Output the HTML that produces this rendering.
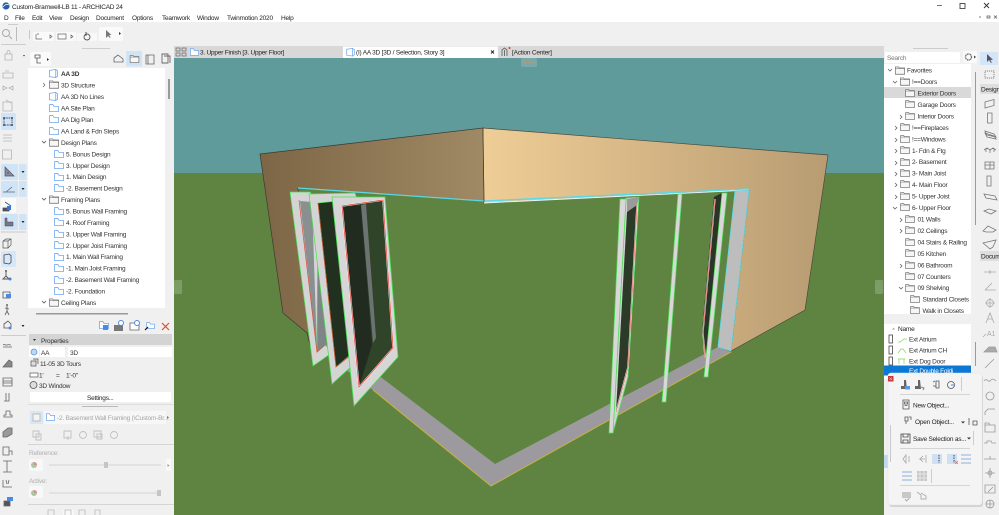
<!DOCTYPE html>
<html><head><meta charset="utf-8"><style>
html,body{margin:0;padding:0;width:999px;height:515px;overflow:hidden;background:#f0f0f0}
svg{display:block;filter:blur(.3px)}
text{font-family:"Liberation Sans",sans-serif;font-size:6.5px;letter-spacing:-.22px;fill:#333}
.m text,text.m{fill:#222}
.d text,text.d{fill:#aaa}
</style></head><body>
<svg width="999" height="515" viewBox="0 0 999 515" xmlns="http://www.w3.org/2000/svg">
<defs>
<symbol id="fb" viewBox="0 0 12 10" overflow="visible"><path d="M.5 9.5V.7H4.5L6 3H11.5V9.5Z" fill="#fff" stroke="#6ea8f0" stroke-width="1"/></symbol>
<symbol id="fg" viewBox="0 0 12 10" overflow="visible"><path d="M.5 9.5V.7H4.5L5 2H11.5V9.5Z" fill="#f6f6f6" stroke="#666" stroke-width=".8"/><path d="M.5 2.6H11.5" stroke="#666" stroke-width=".6"/></symbol>
<symbol id="c3" viewBox="0 0 10 10" overflow="visible"><path d="M.5 1.5L7.5.5V9.5L.5 8.5ZM7.5.5L9.5 2V8L7.5 9.5" fill="#fff" stroke="#6ea8f0" stroke-width=".9"/></symbol>
</defs>

<!-- title + menu -->
<rect width="999" height="22" fill="#fff"/>
<circle cx="6" cy="6" r="3.6" fill="#2a5fa8"/><path d="M3 7Q6 3 9 5" stroke="#fff" stroke-width=".7" fill="none"/>
<text x="12" y="9" class="m">Custom-Bramwell-LB 11 - ARCHICAD 24</text>
<g class="m">
<text x="4" y="20">D</text><text x="15" y="20">File</text><text x="32" y="20">Edit</text><text x="49" y="20">View</text><text x="70" y="20">Design</text><text x="96" y="20">Document</text><text x="132" y="20">Options</text><text x="162" y="20">Teamwork</text><text x="197" y="20">Window</text><text x="227" y="20">Twinmotion 2020</text><text x="281" y="20">Help</text>
</g>
<path d="M937 5.5H942" stroke="#555" stroke-width=".8"/><rect x="960" y="3.5" width="5" height="5" fill="none" stroke="#444" stroke-width=".9"/><path d="M984 3L989 8M989 3L984 8" stroke="#333" stroke-width=".9"/>
<path d="M979 17H981M987 16h3v2h-3zM994 15.500L997 18.500M997 15.500L994 18.500" stroke="#555" stroke-width=".7" fill="none"/>

<!-- top toolbar -->
<rect y="22" width="999" height="24" fill="#f0f0f0"/>
<rect x="29" y="30" width="1" height="9" fill="#c8c8c8"/>
<rect x="33" y="32" width="21" height="9" rx="1.500" fill="#fafafa"/><path d="M36 34v5h6M37 34h2M50 35l2 1.500-2 1.500z" stroke="#666" fill="none" stroke-width=".7"/>
<rect x="56" y="32" width="20" height="9" rx="1.500" fill="#fafafa"/><path d="M58 34h8v5h-8zM71 35l2 1.500-2 1.500z" stroke="#666" fill="none" stroke-width=".7"/>
<rect x="77" y="33" width="20" height="8" rx="1.500" fill="#f8f8f8"/><circle cx="87" cy="37" r="3" fill="none" stroke="#555" stroke-width=".9"/><path d="M86 32v4" stroke="#555"/>
<rect x="99" y="27" width="24" height="14" rx="2" fill="#fafafa"/><path d="M106 30v8l2-2 2 2 .5-1-1.500-2h2.500z" fill="#777"/><path d="M119 32l2 1.500-2 1.500z" fill="#333"/>

<!-- left toolbar -->
<rect y="46" width="28" height="469" fill="#f0f0f0"/>
<rect x="8" y="24" width="10" height="1" fill="#ccc"/><rect x="16" y="27" width="1" height="14" fill="#bbb"/>
<circle cx="6" cy="33" r="3.500" fill="none" stroke="#aaa"/><path d="M9 36l3 3" stroke="#aaa"/>
<rect x="1" y="44" width="25" height="1" fill="#ccc"/>
<g fill="none" stroke="#b5b5b5" stroke-width=".8">
<path d="M5 54h7v6H5zM7 54v-2a1.500 1.500 0 0 1 3 0v2"/>
<path d="M3 73h10v5H3zM5 71h4"/>
<path d="M3 86l4 2-4 2zM13 86l-4 2 4 2z"/>
<path d="M3 102h9v9H3zM6 100l5 3"/>
<path d="M3 135h9M3 138h9M3 141h9"/>
<path d="M2.500 150h9v9h-9z"/>
</g>
<path d="M23 55l2 0-1 1.500z" fill="#333"/>
<rect x="1" y="113" width="15" height="17" rx="1.500" fill="#cfe4f7"/><path d="M4 118h8v7H4z" fill="none" stroke="#445" stroke-width=".9" stroke-dasharray="1.500 .8"/><circle cx="4" cy="118" r="1" fill="#445"/><circle cx="12" cy="118" r="1" fill="#445"/><circle cx="4" cy="125" r="1" fill="#445"/><circle cx="12" cy="125" r="1" fill="#445"/>
<rect x="1" y="164" width="17" height="16" rx="1" fill="#cfe4f7"/><rect x="19" y="164" width="7.500" height="16" rx="1" fill="#cfe4f7"/><path d="M5 167v9h9zM7 173h2" fill="#889" stroke="#556" stroke-width=".7"/><path d="M21.500 171h3l-1.500 2z" fill="#222"/>
<rect x="1" y="181" width="17" height="16" rx="1" fill="#cfe4f7"/><rect x="19" y="181" width="7.500" height="16" rx="1" fill="#cfe4f7"/><path d="M3 192h12M6 192l6-5" stroke="#667" stroke-width=".8" fill="none"/><path d="M21.500 188h3l-1.500 2z" fill="#222"/>
<rect x="1" y="198" width="15" height="15" fill="#fafafa"/><path d="M3 208h6v3H3zM5 202l6 4" stroke="#445" fill="#556" stroke-width=".8"/><rect x="7" y="206" width="4" height="4" fill="#2c7ad8"/>
<rect x="1" y="214" width="17" height="16" rx="1" fill="#cfe4f7"/><rect x="19" y="214" width="7.500" height="16" rx="1" fill="#cfe4f7"/><path d="M5 218h2v4h6v4H5z" fill="#778" stroke="#445" stroke-width=".5"/><path d="M21.500 221h3l-1.500 2z" fill="#222"/>
<rect x="1" y="231" width="25" height="2" fill="#ddd"/>
<path d="M3 241l3-2h5v6l-3 3H3zM3 241h5v7M8 241l3-2" fill="none" stroke="#555" stroke-width=".7"/>
<rect x="1" y="251" width="15" height="16" rx="1.500" fill="#d6e8f8"/><path d="M4 255l5-1 2 1.500v7l-2 1.500-5-1z" fill="none" stroke="#445" stroke-width=".8"/>
<path d="M6 272v4l-3 3h7M6 276l3 3" stroke="#555" fill="none" stroke-width=".9"/><circle cx="6" cy="271" r="1" fill="#555"/><circle cx="10" cy="279" r="1.500" fill="#3b82d8"/>
<path d="M3 292h7v6H3z" fill="none" stroke="#555" stroke-width=".8"/><rect x="6" y="294" width="5" height="4" fill="#4a8adf"/>
<path d="M7 306v5l-2 4M7 311l2 4M5 308l4 1" stroke="#666" fill="none" stroke-width=".9"/><circle cx="7" cy="305" r="1" fill="#666"/>
<path d="M4 324l4-3 3 3v4H4z" fill="none" stroke="#555" stroke-width=".8"/><circle cx="10" cy="328" r="1.500" fill="#4a8adf"/><path d="M21.500 325h3l-1.500 2z" fill="#222"/>
<rect x="1" y="335" width="25" height="1" fill="#ccc"/>
<g fill="none" stroke="#666" stroke-width=".8">
<path d="M3 347h9M3 345c2-2 2 1 4 0s2 0 4 0"/>
<path d="M3 367l6-7 3 2v5z" fill="#888"/>
<path d="M3 378h9v8H3zM3 381h9M3 383h9"/>
<path d="M6 393v8h3v-8M4 401h5"/>
<path d="M4 417h8v-2h-2v-4H6v4H4z"/>
<path d="M3 432l5-4h4v6l-5 3H3z" fill="#999"/>
<path d="M3 447h6v8H3zM6 447h3v4h3v4"/>
<path d="M3 461h9M3 472h9M7 461v11"/>
<path d="M3 480v7h9M6 480l1 4M9 480l-1 4"/>
<path d="M4 506v-5h6v5z" fill="#555"/>
</g>
<rect x="7" y="497" width="6" height="4" fill="#4a8adf"/>

<!-- navigator panel -->
<rect x="28" y="46" width="146" height="469" fill="#f0f0f0"/>
<rect x="82" y="48" width="28" height="1" fill="#ccc"/>
<rect x="30" y="52" width="21" height="14" rx="2" fill="#fafafa"/><path d="M35 55h5v3h-5zM37 58v5h4" fill="none" stroke="#555" stroke-width=".8"/><path d="M47 58l2 1.500-2 1.500z" fill="#333"/>
<path d="M114 62v-4l4-3 5 4v3z" fill="none" stroke="#666" stroke-width=".8"/>
<rect x="126" y="51" width="16" height="15.500" rx="1" fill="#cfe4f7"/><use href="#fg" x="129" y="55" width="11" height="8"/>
<path d="M146 55h8v9h-8zM148 55v9" fill="none" stroke="#666" stroke-width=".8"/>
<path d="M162 54h6v9h-6zM164 56h6v7" fill="none" stroke="#666" stroke-width=".9"/>
<rect x="28" y="68" width="137" height="240" fill="#fff"/>
<rect x="168" y="79" width="2" height="20" fill="#9a9a9a"/>
<rect x="36" y="313" width="92" height="1.500" fill="#999"/>

<use href="#c3" x="49" y="69" width="9" height="9"/><text x="61" y="76" style="font-weight:bold">AA 3D</text>
<path d="M43 83l2 2-2 2" fill="none" stroke="#666" stroke-width=".7"/><use href="#fg" x="49" y="80" width="10" height="9"/><text x="61" y="87.500">3D Structure</text>
<use href="#c3" x="49" y="92" width="9" height="9"/><text x="61" y="99">AA 3D No Lines</text>
<use href="#fb" x="49" y="104" width="10" height="8"/><text x="61" y="110.500">AA Site Plan</text>
<use href="#fb" x="49" y="115" width="10" height="8"/><text x="61" y="122">AA Dig Plan</text>
<use href="#fb" x="49" y="127" width="10" height="8"/><text x="61" y="133.500">AA Land &amp; Fdn Steps</text>
<path d="M42 141l2 2 2-2" fill="none" stroke="#555" stroke-width=".8"/><use href="#fg" x="49" y="138" width="10" height="9"/><text x="61" y="145">Design Plans</text>
<use href="#fb" x="54" y="150" width="10" height="8"/><text x="66" y="156.500">5. Bonus Design</text>
<use href="#fb" x="54" y="161" width="10" height="8"/><text x="66" y="168">3. Upper Design</text>
<use href="#fb" x="54" y="173" width="10" height="8"/><text x="66" y="179">1. Main Design</text>
<use href="#fb" x="54" y="184" width="10" height="8"/><text x="66" y="190.500">-2. Basement Design</text>
<path d="M42 198l2 2 2-2" fill="none" stroke="#555" stroke-width=".8"/><use href="#fg" x="49" y="195" width="10" height="9"/><text x="61" y="202">Framing Plans</text>
<use href="#fb" x="54" y="207" width="10" height="8"/><text x="66" y="213.500">5. Bonus Wall Framing</text>
<use href="#fb" x="54" y="218" width="10" height="8"/><text x="66" y="225">4. Roof Framing</text>
<use href="#fb" x="54" y="230" width="10" height="8"/><text x="66" y="236.500">3. Upper Wall Framing</text>
<use href="#fb" x="54" y="241" width="10" height="8"/><text x="66" y="248">2. Upper Joist Framing</text>
<use href="#fb" x="54" y="253" width="10" height="8"/><text x="66" y="259">1. Main Wall Framing</text>
<use href="#fb" x="54" y="264" width="10" height="8"/><text x="66" y="270.500">-1. Main Joist Framing</text>
<use href="#fb" x="54" y="276" width="10" height="8"/><text x="66" y="282">-2. Basement Wall Framing</text>
<use href="#fb" x="54" y="287" width="10" height="8"/><text x="66" y="293.500">-2. Foundation</text>
<path d="M42 301l2 2 2-2" fill="none" stroke="#555" stroke-width=".8"/><use href="#fg" x="49" y="298" width="10" height="9"/><text x="61" y="305">Ceiling Plans</text>

<!-- nav actions -->
<use href="#fb" x="99" y="321" width="10" height="8"/><rect x="103" y="325" width="5" height="5" fill="#4a8adf"/>
<path d="M114 325h9v6h-9z" fill="#777"/><circle cx="121" cy="323" r="2.500" fill="#fff" stroke="#4a8adf"/>
<path d="M130 323h9v7h-9z" fill="#fff" stroke="#666" stroke-width=".8"/><circle cx="137" cy="323" r="2.500" fill="#fff" stroke="#4a8adf"/>
<use href="#fb" x="146" y="322" width="9" height="7"/><path d="M145 330l3-3" stroke="#111" stroke-width="1.200"/>
<path d="M162 323l7 7M169 323l-7 7" stroke="#e8482a" stroke-width="1.200"/>

<!-- properties -->
<rect x="29" y="334" width="143" height="11" fill="#d4d4d4"/><path d="M33 339h3l-1.500 2z" fill="#333"/><text x="41" y="343">Properties</text>
<rect x="29" y="346" width="10" height="11" fill="#fff"/><circle cx="34" cy="352" r="3" fill="#bcd6f4" stroke="#5b95e0" stroke-width=".8"/>
<rect x="40" y="347" width="25" height="10" fill="#fff"/><text x="41" y="355">AA</text>
<rect x="68" y="347" width="104" height="10" fill="#fff"/><text x="70" y="355">3D</text>
<path d="M31 361h5v5h-5zM33 359h5v5" fill="#ddd" stroke="#555" stroke-width=".7"/><text x="40" y="366">11-05 3D Tours</text>
<rect x="30" y="373" width="8" height="4" fill="#fff" stroke="#555" stroke-width=".7"/><text x="39" y="377.500">1'</text><text x="56" y="377.500">=</text><text x="66" y="377.500">1'-0"</text>
<circle cx="33.500" cy="385" r="3.500" fill="#ddd" stroke="#555" stroke-width=".8"/><text x="39" y="388">3D Window</text>
<rect x="30" y="392" width="141" height="10" rx="1.500" fill="#fff"/><text x="87" y="400" style="fill:#222">Settings...</text>
<rect x="28" y="404" width="146" height="1" fill="#ddd"/><rect x="82" y="406" width="36" height="1" fill="#bbb"/>

<rect x="30" y="411" width="13" height="13" rx="1" fill="#d9e6f4"/><rect x="33" y="414" width="7" height="7" fill="#f4f4f4" stroke="#bbb"/>
<rect x="44" y="411" width="122" height="13" fill="#f7f7f7"/><use href="#fb" x="46" y="413" width="9" height="8"/>
<text x="57" y="420" style="fill:#a5a5a5">-2. Basement Wall Framing (\Custom-Br...</text><path d="M167 416l2 1.500-2 1.500z" fill="#777"/>
<g fill="none" stroke="#c0c0c0" stroke-width=".9"><path d="M33 431h6v6h-6zM36 434h5v6h-5z"/><path d="M64 431h7v7h-7zM68 436v4M66 438h4"/><circle cx="83" cy="435" r="3.500"/><path d="M94 431h7v6h-7zM97 434h5v5h-5z"/><circle cx="114" cy="435" r="3.500"/></g>
<rect x="28" y="444" width="146" height="1" fill="#d4d4d4"/>
<text x="29" y="455" style="fill:#b0b0b0">Reference:</text>
<rect x="29" y="459" width="14" height="12" rx="2" fill="#f8f8f8"/><circle cx="34" cy="465" r="3" fill="#a5c8a5"/><path d="M34 465V462A3 3 0 0 1 37 465Z" fill="#d98f8f"/>
<rect x="49" y="464" width="112" height="2" fill="#e2e2e2"/><rect x="104" y="462" width="4" height="6" fill="#c5c5c5"/>
<rect x="166" y="459" width="5" height="12" fill="#f8f8f8"/><path d="M167.500 464l2 1.500-2 1.500z" fill="#999"/>
<text x="29" y="483" style="fill:#b0b0b0">Active:</text>
<rect x="29" y="486" width="14" height="12" rx="2" fill="#f8f8f8"/><circle cx="34" cy="493" r="3" fill="#a5c8a5"/><path d="M34 493V490A3 3 0 0 1 37 493Z" fill="#d98f8f"/>
<rect x="49" y="492" width="112" height="2" fill="#e2e2e2"/><rect x="157" y="490" width="4" height="6" fill="#c5c5c5"/>
<rect x="28" y="504" width="146" height="1" fill="#d4d4d4"/>
<rect x="63" y="510" width="11" height="5" fill="#f8f8f8"/><g fill="none" stroke="#bbb" stroke-width=".8"><path d="M48 515v-5h6v5M65 515v-5h6v5M79 515v-5h6v5M95 515v-5h5v5"/></g>

<!-- tabs -->
<rect x="174" y="46" width="710" height="12" fill="#d8d8d8"/>
<path d="M176 48h4v3h-4zM182 48h4v3h-4zM176 53h4v3h-4zM182 53h4v3h-4z" fill="none" stroke="#666" stroke-width=".7"/>
<use href="#fb" x="190" y="48" width="9" height="8"/><text x="200" y="54.500" style="fill:#222">3. Upper Finish [3. Upper Floor]</text>
<rect x="343" y="46.500" width="155" height="11.500" fill="#fff"/>
<use href="#c3" x="346" y="48" width="9" height="8.500"/><text x="356" y="54.500" style="fill:#222">(I) AA 3D [3D / Selection, Story 3]</text>
<path d="M491 50.500l3 3M494 50.500l-3 3" stroke="#222" stroke-width=".9"/>
<path d="M502 56v-6l2.500-2 2.500 2v6M504.500 50v6" fill="none" stroke="#555" stroke-width=".8"/><circle cx="509.500" cy="48" r="1" fill="#e8361e"/>
<text x="512" y="54.500" style="fill:#222">[Action Center]</text>

<!-- 3D view -->
<rect x="174" y="58" width="710" height="115.500" fill="#5f9b9a"/>
<rect x="174" y="173" width="710" height="342" fill="#5f8442"/>
<rect x="521" y="58" width="16" height="9" rx="1.500" fill="#78a8a8"/><path d="M523 62.500h12" stroke="#c09a6a" stroke-dasharray="1.500 1"/>
<rect x="174" y="280" width="8" height="14" rx="1.500" fill="#7d9c66"/><rect x="875" y="280" width="8" height="14" rx="1.500" fill="#7d9c66"/>

<defs>
<linearGradient id="lw" x1="0" x2="1" y1="0" y2="0"><stop offset="0" stop-color="#7d6645"/><stop offset="1" stop-color="#a08a65"/></linearGradient>
<linearGradient id="rw" x1="0" x2="1" y1="0" y2="0"><stop offset="0" stop-color="#efcd96"/><stop offset="1" stop-color="#b89c72"/></linearGradient>
</defs>
<!-- floor strip -->
<path d="M318 340L382 378 495 464 718 347 731 352 491 486 373 390 330 358Z" fill="#9c9a9e"/>
<path d="M731 352L491 486 373 390" fill="none" stroke="#c9b23c" stroke-width="1"/>
<!-- walls -->
<path d="M260 154L483 128 484 201 298 188 310 345 307 333 283 313Z" fill="url(#lw)" stroke="#3c3a30" stroke-width=".7"/>
<path d="M483 128L828 155 805 310 731 351 749 190 484 203Z" fill="url(#rw)" stroke="#4c4a3a" stroke-width=".7"/>
<path d="M298 188L484 201 749 189" fill="none" stroke="#5ad8e4" stroke-width="1.300"/>
<path d="M484 203L749 190" fill="none" stroke="#e4fbff" stroke-width=".9"/>
<path d="M483 128L484 202" stroke="#4c4433" stroke-width=".7"/>
<!-- jamb right -->
<path d="M735 191L749 190 731 351 718 347Z" fill="#bdbdbd" stroke="#5ad8e4" stroke-width=".8"/>

<!-- left doors -->
<g>
<path d="M300 201L325 200 337 340 317 363Z" fill="#7f8586"/>
<path d="M290 192L310 192 318 203 317 352 325 345 333 352 313 366Z" fill="#d4d4d4" stroke="#46e050" stroke-width=".7"/>
<path d="M300 201L312 202 317 352Z" fill="#8a8f90"/>
<path d="M299 200L317 352 325 345" fill="none" stroke="#d84a3a" stroke-width=".7"/>
<path d="M318 203L355 199 378 342 336 367Z" fill="#22301f"/>
<path d="M309 194L355 193 357 199 318 203 336 367 376 333 377 343 332 384Z" fill="#d4d4d4" stroke="#46e050" stroke-width=".7"/>
<path d="M318 203L336 367 351 355" fill="none" stroke="#d84a3a" stroke-width=".7"/>
<path d="M342 206L383 200 393 348 359 387Z" fill="#2f4429"/>
<path d="M343 207L361 205 372 345 359 387Z" fill="#222b1f"/>
<path d="M361 205L366 204 376 338 373 343Z" fill="#6d7372"/>
<path fill-rule="evenodd" d="M332 197L385 197 398 357 354 406ZM342 206L383 200 393 348 359 387Z" fill="#d6d6d6" stroke="#46e050" stroke-width=".8"/>
<path d="M342 206L383 200 393 348 359 387Z" fill="none" stroke="#fafafa" stroke-width="1.500"/>
<path d="M342 206L383 200 393 348 359 387Z" fill="none" stroke="#e0352e" stroke-width=".7"/>
</g>
<!-- right doors -->
<path d="M626 198L639 197 628 377 613 433Z" fill="#d2d2d2" stroke="#46e050" stroke-width=".7"/>
<path d="M627 199L639 197 637 205 627 212Z" fill="#9a9a9a"/>
<path d="M627 212L637 205 628 367 616 412Z" fill="#2c3a28"/>
<path d="M637 205L628 367 616 412" fill="none" stroke="#f4f4f4" stroke-width="1.400"/>
<path d="M637 205L628 367 616 412" fill="none" stroke="#d83a30" stroke-width=".5"/>
<path d="M620 199L626 199 613 433 609 433Z" fill="#d8d8d8" stroke="#46e050" stroke-width=".7"/>
<path d="M678 194L682 194 666 402 662 402Z" fill="#d8d8d8" stroke="#46e050" stroke-width=".7"/>
<path d="M714 197L722 193 721 202 710 358 706 350 702 332Z" fill="#2a3527"/>
<path d="M715 199L703 332 705 358" fill="none" stroke="#f4f4f4" stroke-width="1.300"/>
<path d="M715 199L703 332 705 358" fill="none" stroke="#d83a30" stroke-width=".5"/>
<path d="M722 193L727 193 708 377 704 377Z" fill="#d8d8d8" stroke="#46e050" stroke-width=".7"/>

<!-- right panel -->
<rect x="884" y="46" width="115" height="469" fill="#f0f0f0"/>
<rect x="913" y="48" width="35" height="1" fill="#ccc"/>
<rect x="885" y="52" width="75" height="11" fill="#fff"/><text x="887" y="60" style="fill:#777">Search</text>
<rect x="963" y="51" width="14" height="12" rx="2" fill="#fafafa"/><circle cx="968.500" cy="57" r="3" fill="none" stroke="#666" stroke-width="1.300" stroke-dasharray="1.200 .5"/><path d="M974 55.500l2 1.500-2 1.500z" fill="#444"/>
<rect x="884" y="64" width="87" height="250" fill="#fff"/>
<rect x="884" y="87" width="87" height="11" fill="#d9d9d9"/>
<rect x="975" y="72" width="1" height="153" fill="#9a9a9a"/>
<g fill="none" stroke="#666" stroke-width=".8">
<path d="M888 69l2 2 2-2M893 81l2 2 2-2M895 126l2 2-2 2M895 138l2 2-2 2M895 149l2 2-2 2M895 161l2 2-2 2M895 172l2 2-2 2M895 183l2 2-2 2M895 195l2 2-2 2M893 207l2 2 2-2M900 218l2 2-2 2M900 229l2 2-2 2M900 264l2 2-2 2M899 287l2 2 2-2M900 115l2 2-2 2"/>
</g>
<use href="#fg" x="895" y="66" width="10" height="9"/>
<use href="#fg" x="900" y="77" width="10" height="9"/><text x="912" y="84">!==Doors</text>
<use href="#fg" x="905" y="89" width="10" height="8"/><text x="917.500" y="95.500">Exterior Doors</text>
<use href="#fg" x="905" y="100" width="10" height="8"/><text x="917.500" y="107">Garage Doors</text>
<use href="#fg" x="905" y="112" width="10" height="8"/><text x="917.500" y="118.500">Interior Doors</text>
<use href="#fg" x="900" y="123" width="10" height="8"/><text x="912" y="130">!==Fireplaces</text>
<use href="#fg" x="900" y="135" width="10" height="8"/><text x="912" y="141.500">!==Windows</text>
<use href="#fg" x="900" y="146" width="10" height="8"/><text x="912" y="153">1- Fdn &amp; Ftg</text>
<use href="#fg" x="900" y="158" width="10" height="8"/><text x="912" y="164">2- Basement</text>
<use href="#fg" x="900" y="169" width="10" height="8"/><text x="912" y="175.500">3- Main Joist</text>
<use href="#fg" x="900" y="180" width="10" height="8"/><text x="912" y="187">4- Main Floor</text>
<use href="#fg" x="900" y="192" width="10" height="8"/><text x="912" y="198.500">5- Upper Joist</text>
<use href="#fg" x="900" y="203" width="10" height="8"/><text x="912" y="210">6- Upper Floor</text>
<use href="#fg" x="905" y="215" width="10" height="8"/><text x="917.500" y="221.500">01 Walls</text>
<use href="#fg" x="905" y="226" width="10" height="8"/><text x="917.500" y="233">02 Ceilings</text>
<use href="#fg" x="905" y="238" width="10" height="8"/><text x="917.500" y="244.500">04 Stairs &amp; Railing</text>
<use href="#fg" x="905" y="249" width="10" height="8"/><text x="917.500" y="256">05 Kitchen</text>
<use href="#fg" x="905" y="261" width="10" height="8"/><text x="917.500" y="267.500">06 Bathroom</text>
<use href="#fg" x="905" y="272" width="10" height="8"/><text x="917.500" y="279">07 Counters</text>
<use href="#fg" x="905" y="284" width="10" height="8"/><text x="917.500" y="290">09 Shelving</text>
<use href="#fg" x="910" y="295" width="10" height="8"/><text x="922.500" y="301.500">Standard Closets</text>
<use href="#fg" x="910" y="306" width="10" height="8"/><text x="922.500" y="313">Walk in Closets</text>
<text x="907" y="72.500">Favorites</text>

<!-- object list -->
<rect x="884" y="324" width="87" height="55" fill="#fff"/>
<path d="M892 329.500h3l-1.500-2z" fill="#aaa"/><text x="898" y="331" style="fill:#222">Name</text>
<rect x="884" y="365.500" width="87" height="10" fill="#0a78d4"/>
<rect x="975" y="342" width="1" height="24" fill="#9a9a9a"/>
<g fill="#fff" stroke="#444" stroke-width=".8"><rect x="889" y="335" width="3.500" height="8"/><rect x="889" y="346" width="3.500" height="8"/><rect x="889" y="357" width="3.500" height="8"/></g>
<path d="M898 342h2l4-3h3M898 353l3-4h2l3 4M898 359h7M899 359v5M904 359v5" fill="none" stroke="#7dd860" stroke-width=".7"/>
<text x="909" y="341.500">Ext Atrium</text><text x="909" y="352.500">Ext Atrium CH</text><text x="909" y="363.500">Ext Dog Door</text><text x="909" y="373" style="fill:#fff">Ext Double Foldi</text>
<rect x="884" y="455" width="5" height="13" fill="#bcd8ef"/>

<!-- right toolbar -->
<rect x="980" y="52" width="18" height="13" fill="#d3e5f6"/><path d="M987 54v8l2-2 2 3 .8-.6-1.500-2.500H993z" fill="#556"/>
<rect x="985" y="71" width="9" height="7" fill="none" stroke="#666" stroke-width=".7" stroke-dasharray="1.200 .8"/>
<rect x="980" y="84" width="19" height="10" fill="#dedede"/><text x="981" y="91.500" style="fill:#222">Design</text>
<rect x="980" y="251" width="19" height="10" fill="#dedede"/><text x="981" y="258.500" style="fill:#222">Docum</text>
<g fill="none" stroke="#777" stroke-width=".8">
<path d="M985 102l9-2.500v6l-9 2.500z"/>
<path d="M987.500 113h4.500v10h-4.500z"/>
<path d="M985 131l9 3 2 3-9-2zM985 133l9 3 2 3-9-2z"/>
<path d="M984 150l3-2 3 2 3-2 3 2M986 149v3M990 150v3M994 149v3"/>
<path d="M985 162h9v7h-9zM990 162v7M985 165h9"/>
<path d="M987 176h4v10h-4z"/>
<path d="M984 194l11 2 2 4-11-2z"/>
<path d="M984 211l5-2 7 2-5 3z"/>
<path d="M983 231l5-5 8 4-3 2-7 0z"/>
<path d="M983 243l13-3-3 7-3 2z"/>
</g>
<g fill="none" stroke="#aaa" stroke-width=".8">
<path d="M984 272h12M990 270v4"/>
<path d="M985 290l7-7M985 290h11"/>
<circle cx="990" cy="303" r="3.500"/><path d="M990 298v10M985 303h10"/>
<path d="M986 323l4-10 4 10M987.500 319h5"/>
<path d="M983 337l3-3"/>
</g>
<text x="987" y="336" style="fill:#aaa;font-size:7px">A1</text>
<g fill="none" stroke="#999" stroke-width=".8">
<path d="M984 352l5-5h6l2 5z" fill="#aaa"/>
<path d="M985 368l9-9"/>
<path d="M984 381c3-4 4 2 6 0s3-3 6 0"/>
<circle cx="990" cy="396" r="4"/>
<path d="M985 415v-3l3-3h7"/>
<path d="M985 425h10v7h-10zM985 425v-2h4l1 2"/>
<path d="M984 443h3v-2h4l1 2h4"/>
<path d="M984 459h12M990 456v3"/>
<circle cx="990" cy="473" r="2"/><path d="M990 468v10M985 473h10"/>
<path d="M985 485h10v8h-10zM988 492l5-5"/>
<circle cx="990" cy="504" r="4"/><path d="M986 504h8M990 500v8"/>
</g>

<!-- popup palette -->
<rect x="889" y="375" width="94" height="132" rx="3" fill="#000" opacity=".12"/>
<rect x="888" y="373" width="94" height="132" rx="3" fill="#f4f4f4" stroke="#e4e4e4" stroke-width=".6"/>
<rect x="888" y="376" width="5.500" height="5.500" fill="#c43c3c"/><path d="M889.500 377.500l2.500 2.500M892 377.500l-2.500 2.500" stroke="#fff" stroke-width=".5"/>
<path d="M906 380h-2v6h-3v3h6" fill="#666"/><rect x="905" y="386" width="5" height="3.500" fill="#5a9ae0"/>
<path d="M920 380h-2v6h-3v3h6" fill="#666"/><path d="M921 387l3 1-1 2" fill="none" stroke="#4aa860"/>
<path d="M936 381h3v7h-3zM933 386h3" fill="none" stroke="#555" stroke-width=".8"/><path d="M933 382l2-1" stroke="#4a8adf"/>
<circle cx="951" cy="385" r="3.500" fill="none" stroke="#555" stroke-width=".8"/><path d="M951 385h4" stroke="#4a8adf"/>
<rect x="961" y="377" width="1" height="14" fill="#ccc"/>
<rect x="900" y="394" width="70" height="1" fill="#d4d4d4"/>
<path d="M903 400h6v9h-6zM904.500 402h3v2h-3zM904.500 405.500h3" fill="none" stroke="#555" stroke-width=".8"/><text x="913" y="407.500" style="fill:#222">New Object...</text>
<path d="M905 417h3v4h-3zM909 417h2v3M906 421v3" fill="none" stroke="#555" stroke-width=".8"/><text x="915" y="424" style="fill:#222">Open Object...</text><path d="M961 421.500h4l-2 2z" fill="#333"/>
<path d="M969 418v7M973 421h4v4h-4z" fill="none" stroke="#555" stroke-width=".8"/>
<path d="M901 434h9v9h-9zM903 434v3h5v-3M903 443v-3h5v3" fill="none" stroke="#444" stroke-width=".8"/><text x="913" y="441" style="fill:#222">Save Selection as...</text><path d="M967 437.500h4l-2 2z" fill="#333"/>
<rect x="973" y="431" width="1" height="14" fill="#ccc"/>
<rect x="890" y="425" width="1" height="37" fill="#c8c8c8"/>
<rect x="900" y="448" width="70" height="1" fill="#d4d4d4"/>
<g fill="none" stroke="#a8a8a8" stroke-width=".8">
<path d="M903 459l3-4v8zM909 456v6"/>
<path d="M919 459h6M923 456l-3 3 3 3M926 455v8"/>
</g>
<rect x="932" y="454" width="10" height="10" fill="#cfe0f3"/><path d="M939 455v8" stroke="#335" stroke-width=".9" stroke-dasharray="1.500 1"/>
<rect x="947" y="454" width="10" height="10" fill="#cfe0f3"/><path d="M954 455v8" stroke="#335" stroke-width=".9" stroke-dasharray="1.500 1"/><path d="M955 461l3 3M958 461l-3 3" stroke="#d66" stroke-width=".7"/>
<path d="M961 455h10M961 459h10M961 463h10" stroke="#8ab0da" stroke-width=".9"/>
<path d="M902 472h10M902 476h10M902 480h10" stroke="#8ab0da" stroke-width=".9"/>
<rect x="917" y="471" width="10" height="10" fill="#c8c8c8"/><path d="M917 474h10M917 478h10M920 471v10M924 471v10" stroke="#eee" stroke-width=".7"/>
<rect x="931" y="469" width="1" height="14" fill="#ccc"/>
<rect x="900" y="485" width="70" height="1" fill="#d4d4d4"/>
<rect x="902" y="492" width="9" height="6" fill="#c8c8c8"/><path d="M905 499l1.500 2 3-3" stroke="#aaa" fill="none"/>
<path d="M917 492l4 3v4h5v-3l-5-3" fill="none" stroke="#b0b0b0"/>
</svg>
</body></html>
